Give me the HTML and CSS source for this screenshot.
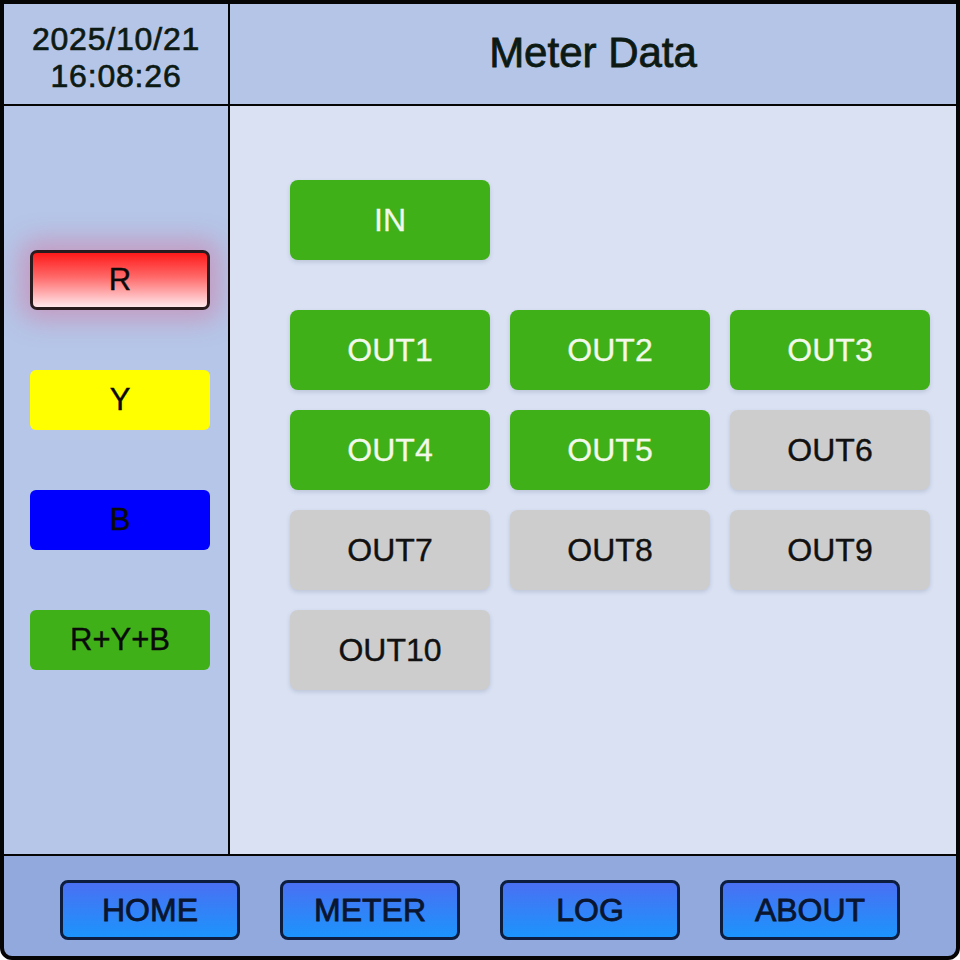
FILE: index.html
```html
<!DOCTYPE html>
<html>
<head>
<meta charset="utf-8">
<link rel="stylesheet" href="styles.css">
</head>
<body>
<div class="frame">
  <header class="top">
    <div class="clock">
      <div class="clock-line">2025/10/21</div>
      <div class="clock-line">16:08:26</div>
    </div>
    <div class="title">Meter Data</div>
  </header>
  <div class="middle">
    <aside class="side">
      <div class="phase phase-r">R</div>
      <div class="phase phase-y">Y</div>
      <div class="phase phase-b">B</div>
      <div class="phase phase-all">R+Y+B</div>
    </aside>
    <main class="content">
      <div class="grid">
        <div class="chan on">IN</div>
      </div>
      <div class="grid outs">
        <div class="chan on">OUT1</div>
        <div class="chan on">OUT2</div>
        <div class="chan on">OUT3</div>
        <div class="chan on">OUT4</div>
        <div class="chan on">OUT5</div>
        <div class="chan off">OUT6</div>
        <div class="chan off">OUT7</div>
        <div class="chan off">OUT8</div>
        <div class="chan off">OUT9</div>
        <div class="chan off">OUT10</div>
      </div>
    </main>
  </div>
  <footer class="nav">
    <div class="nav-btn">HOME</div>
    <div class="nav-btn">METER</div>
    <div class="nav-btn">LOG</div>
    <div class="nav-btn">ABOUT</div>
  </footer>
</div>
</body>
</html>
```

FILE: styles.css
```css
* { box-sizing: border-box; }
html, body { margin: 0; padding: 0; background: #ffffff; }
body { font-family: "Liberation Sans", Arial, sans-serif; color: #111; }

.frame {
  width: 960px;
  height: 960px;
  border: 4px solid #050505;
  border-radius: 0 0 12px 12px;
  overflow: hidden;
  display: flex;
  flex-direction: column;
  background: #050505;
}

.top {
  height: 102px;
  display: flex;
  border-bottom: 2px solid #050505;
  background: #b5c5e8;
}
.clock {
  width: 226px;
  border-right: 2px solid #050505;
  display: flex;
  flex-direction: column;
  align-items: center;
  padding-top: 17px;
  font-size: 32px;
  line-height: 37px;
  letter-spacing: 0.8px;
  color: #0d1a14;
  -webkit-text-stroke: 0.7px #0d1a14;
}
.title {
  flex: 1;
  display: flex;
  align-items: center;
  justify-content: center;
  font-size: 42px;
  color: #0d1a14;
  padding-bottom: 2px;
  -webkit-text-stroke: 0.8px #0d1a14;
}

.middle {
  height: 748px;
  display: flex;
}
.side {
  width: 226px;
  border-right: 2px solid #050505;
  background: #b5c6e8;
  display: flex;
  flex-direction: column;
  gap: 60px;
  padding: 144px 0 0 26px;
}
.phase {
  width: 180px;
  height: 60px;
  border-radius: 6px;
  display: flex;
  align-items: center;
  justify-content: center;
  font-size: 31px;
  color: #0a0a0a;
  -webkit-text-stroke: 0.4px #0a0a0a;
}
.phase-r {
  border: 3px solid #2a1c1e;
  border-radius: 7px;
  background: linear-gradient(to bottom, #ff1a1a 0%, #ff6a6a 45%, #ffe8ec 100%);
  box-shadow: 0 0 26px 10px rgba(220, 90, 135, 0.4);
}
.phase-y { background: #ffff00; }
.phase-b { background: #0000ff; }
.phase-all { background: #40b018; }

.content {
  flex: 1;
  background: #d9e1f3;
  padding: 74px 0 0 60px;
  display: flex;
  flex-direction: column;
  gap: 50px;
}
.grid {
  display: grid;
  grid-template-columns: repeat(3, 200px);
  gap: 20px;
}
.chan {
  height: 80px;
  border-radius: 8px;
  display: flex;
  align-items: center;
  justify-content: center;
  font-size: 32px;
  box-shadow: 0 2px 4px rgba(60, 70, 100, 0.18);
}
.chan.on { background: #40b018; color: #f2f8ea; -webkit-text-stroke: 0.3px #f2f8ea; }
.chan.off { background: #cdcdcd; color: #111111; -webkit-text-stroke: 0.4px #111111; }

.nav {
  height: 102px;
  border-top: 2px solid #050505;
  background: #91a9dd;
  display: flex;
  justify-content: center;
  gap: 40px;
  padding-top: 24px;
}
.nav-btn {
  width: 180px;
  height: 60px;
  border: 3px solid #0c1d3e;
  border-radius: 8px;
  background: linear-gradient(to bottom, #4a70f2 0%, #1c94fc 100%);
  display: flex;
  align-items: center;
  justify-content: center;
  font-size: 32px;
  color: #0a1530;
  -webkit-text-stroke: 0.8px #0a1530;
}
```
